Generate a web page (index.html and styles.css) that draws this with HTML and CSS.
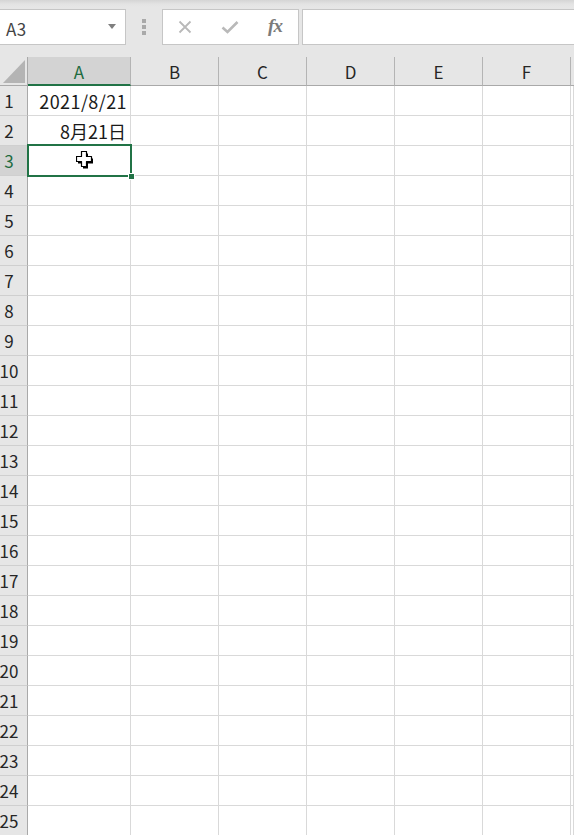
FILE: index.html
```html
<!DOCTYPE html>
<html lang="ja">
<head>
<meta charset="utf-8">
<title>Sheet</title>
<link rel="stylesheet" href="styles.css">
</head>
<body>
<div class="app">
  <div class="toolbar">
    <div class="namebox">
      <span class="nametext">A3</span>
      <svg class="arrow" width="8" height="5" viewBox="0 0 8 5"><polygon points="0,0 8,0 4,5" fill="#7f7f7f"/></svg>
    </div>
    <div class="dots"><span></span><span></span><span></span></div>
    <div class="fbuttons">
      <div class="slot s1"><svg width="14" height="14" viewBox="0 0 14 14"><path d="M1.5 1.5 L12.5 12.5 M12.5 1.5 L1.5 12.5" stroke="#b9b9b9" stroke-width="1.8" fill="none"/></svg></div>
      <div class="slot s2"><svg width="18" height="14" viewBox="0 0 18 14"><path d="M1.5 7.5 L6.5 12 L16.5 2" stroke="#b9b9b9" stroke-width="2.6" fill="none"/></svg></div>
      <div class="slot s3"><span class="fx">fx</span></div>
    </div>
    <div class="formula"></div>
  </div>

  <div class="sheetwrap">
    <div class="sheet">
      <div class="corner"><svg width="28" height="29" viewBox="0 0 28 29"><polygon points="25,3 25,26 3,26" fill="#b4b4b4"/></svg></div>
      <div class="ch sel">A</div><div class="ch">B</div><div class="ch">C</div><div class="ch">D</div><div class="ch">E</div><div class="ch">F</div><div class="ch last"></div>

      <div class="rh">1</div><div class="c ra num">2021/8/21</div><div class="c"></div><div class="c"></div><div class="c"></div><div class="c"></div><div class="c"></div><div class="c"></div>
      <div class="rh">2</div><div class="c ra j">8月21日</div><div class="c"></div><div class="c"></div><div class="c"></div><div class="c"></div><div class="c"></div><div class="c"></div>
      <div class="rh sel">3</div><div class="c"></div><div class="c"></div><div class="c"></div><div class="c"></div><div class="c"></div><div class="c"></div><div class="c"></div>
      <div class="rh">4</div><div class="c"></div><div class="c"></div><div class="c"></div><div class="c"></div><div class="c"></div><div class="c"></div><div class="c"></div>
      <div class="rh">5</div><div class="c"></div><div class="c"></div><div class="c"></div><div class="c"></div><div class="c"></div><div class="c"></div><div class="c"></div>
      <div class="rh">6</div><div class="c"></div><div class="c"></div><div class="c"></div><div class="c"></div><div class="c"></div><div class="c"></div><div class="c"></div>
      <div class="rh">7</div><div class="c"></div><div class="c"></div><div class="c"></div><div class="c"></div><div class="c"></div><div class="c"></div><div class="c"></div>
      <div class="rh">8</div><div class="c"></div><div class="c"></div><div class="c"></div><div class="c"></div><div class="c"></div><div class="c"></div><div class="c"></div>
      <div class="rh">9</div><div class="c"></div><div class="c"></div><div class="c"></div><div class="c"></div><div class="c"></div><div class="c"></div><div class="c"></div>
      <div class="rh">10</div><div class="c"></div><div class="c"></div><div class="c"></div><div class="c"></div><div class="c"></div><div class="c"></div><div class="c"></div>
      <div class="rh">11</div><div class="c"></div><div class="c"></div><div class="c"></div><div class="c"></div><div class="c"></div><div class="c"></div><div class="c"></div>
      <div class="rh">12</div><div class="c"></div><div class="c"></div><div class="c"></div><div class="c"></div><div class="c"></div><div class="c"></div><div class="c"></div>
      <div class="rh">13</div><div class="c"></div><div class="c"></div><div class="c"></div><div class="c"></div><div class="c"></div><div class="c"></div><div class="c"></div>
      <div class="rh">14</div><div class="c"></div><div class="c"></div><div class="c"></div><div class="c"></div><div class="c"></div><div class="c"></div><div class="c"></div>
      <div class="rh">15</div><div class="c"></div><div class="c"></div><div class="c"></div><div class="c"></div><div class="c"></div><div class="c"></div><div class="c"></div>
      <div class="rh">16</div><div class="c"></div><div class="c"></div><div class="c"></div><div class="c"></div><div class="c"></div><div class="c"></div><div class="c"></div>
      <div class="rh">17</div><div class="c"></div><div class="c"></div><div class="c"></div><div class="c"></div><div class="c"></div><div class="c"></div><div class="c"></div>
      <div class="rh">18</div><div class="c"></div><div class="c"></div><div class="c"></div><div class="c"></div><div class="c"></div><div class="c"></div><div class="c"></div>
      <div class="rh">19</div><div class="c"></div><div class="c"></div><div class="c"></div><div class="c"></div><div class="c"></div><div class="c"></div><div class="c"></div>
      <div class="rh">20</div><div class="c"></div><div class="c"></div><div class="c"></div><div class="c"></div><div class="c"></div><div class="c"></div><div class="c"></div>
      <div class="rh">21</div><div class="c"></div><div class="c"></div><div class="c"></div><div class="c"></div><div class="c"></div><div class="c"></div><div class="c"></div>
      <div class="rh">22</div><div class="c"></div><div class="c"></div><div class="c"></div><div class="c"></div><div class="c"></div><div class="c"></div><div class="c"></div>
      <div class="rh">23</div><div class="c"></div><div class="c"></div><div class="c"></div><div class="c"></div><div class="c"></div><div class="c"></div><div class="c"></div>
      <div class="rh">24</div><div class="c"></div><div class="c"></div><div class="c"></div><div class="c"></div><div class="c"></div><div class="c"></div><div class="c"></div>
      <div class="rh">25</div><div class="c"></div><div class="c"></div><div class="c"></div><div class="c"></div><div class="c"></div><div class="c"></div><div class="c"></div>
    </div>
    <div class="selection"><div class="handle"></div></div>
    <svg class="cursor" width="19" height="19" viewBox="0 0 19 19">
      <path d="M7 2.5 H12 V7.5 H17 V12.5 H12 V17.5 H7 V12.5 H2 V7.5 H7 Z" fill="#000"/>
      <path d="M5.5 0.5 H10.5 V5.5 H15.5 V10.5 H10.5 V15.5 H5.5 V10.5 H0.5 V5.5 H5.5 Z" fill="#fff" stroke="#000" stroke-width="1.2" stroke-linejoin="round"/>
    </svg>
  </div>
</div>
</body>
</html>
```
FILE: styles.css
```css
html, body {
  margin: 0;
  padding: 0;
  background: #ffffff;
  overflow: hidden;
}
body {
  font-family: "Noto Sans CJK JP", "Noto Sans", sans-serif;
  color: #222;
}
.app {
  width: 574px;
  height: 835px;
  overflow: hidden;
}
.toolbar {
  height: 57px;
  box-sizing: border-box;
  padding-top: 9px;
  background: linear-gradient(#d5d5d5 0px, #e3e3e3 4px, #e6e6e6 7px);
  display: flex;
  align-items: flex-start;
}
.namebox {
  margin-left: -1px;
  width: 127px;
  height: 36px;
  box-sizing: border-box;
  border: 1px solid #c6c6c6;
  background: #fff;
  display: flex;
  align-items: center;
  justify-content: space-between;
  padding: 0 9px 0 6px;
}
.nametext {
  font-size: 17px;
  color: #444;
  letter-spacing: 0.5px;
  line-height: 1;
  padding-top: 2px;
}
.arrow {
  margin-top: -2px;
}
.dots {
  margin-left: 16px;
  width: 4px;
  height: 36px;
  display: flex;
  flex-direction: column;
  justify-content: center;
  gap: 2px;
}
.dots span {
  display: block;
  width: 4px;
  height: 4px;
  background: #a9a9a9;
}
.fbuttons {
  margin-left: 16px;
  width: 137px;
  height: 36px;
  box-sizing: border-box;
  border: 1px solid #c6c6c6;
  background: #fff;
  display: flex;
  align-items: center;
}
.slot {
  height: 34px;
  display: flex;
  align-items: center;
  justify-content: center;
}
.s1 { width: 43px; }
.s2 { width: 48px; }
.s3 { width: 42px; }
.fx {
  font-family: "Liberation Serif", "DejaVu Serif", serif;
  font-style: italic;
  font-weight: bold;
  font-size: 19px;
  color: #7b7b7b;
  letter-spacing: -1px;
  line-height: 1;
  margin-top: -3px;
}
.formula {
  margin-left: 3px;
  flex: 1;
  height: 36px;
  box-sizing: border-box;
  border: 1px solid #c6c6c6;
  border-right: none;
  background: #fff;
}
.sheetwrap {
  position: relative;
}
.sheet {
  display: grid;
  grid-template-columns: 28px 103px repeat(5, 88px) 1fr;
  grid-template-rows: 29px;
  grid-auto-rows: 30px;
}
.corner {
  background: #e6e6e6;
  border-right: 1px solid #a9a9a9;
  border-bottom: 1px solid #a9a9a9;
  box-sizing: border-box;
  overflow: hidden;
}
.corner svg { display: block; }
.ch {
  background: #e6e6e6;
  border-right: 1px solid #b4b4b4;
  border-bottom: 1px solid #a9a9a9;
  box-sizing: border-box;
  display: flex;
  align-items: center;
  justify-content: center;
  font-size: 17px;
  color: #262626;
  padding-top: 1px;
}
.ch.sel {
  background: #d3d3d3;
  color: #1e6b40;
  border-bottom: 2px solid #217346;
}
.ch.last { border-right: none; }
.rh {
  background: #e6e6e6;
  border-right: 1px solid #a9a9a9;
  border-bottom: 1px solid #cfcfcf;
  box-sizing: border-box;
  display: flex;
  align-items: center;
  justify-content: center;
  padding-right: 9px;
  font-size: 17px;
  color: #262626;
}
.rh.sel {
  background: #d3d3d3;
  color: #1e6b40;
}
.c {
  border-right: 1px solid #d9d9d9;
  border-bottom: 1px solid #d9d9d9;
  box-sizing: border-box;
  font-size: 18px;
  color: #1a1a1a;
  display: flex;
  align-items: center;
  white-space: nowrap;
}
.c.ra {
  justify-content: flex-end;
  padding-right: 3px;
}
.c.num { letter-spacing: 0.4px; padding-right: 3px; }
.c.j { padding-right: 4px; }
.selection {
  position: absolute;
  left: 27px;
  top: 87px;
  width: 105px;
  height: 33px;
  box-sizing: border-box;
  border: 2px solid #217346;
}
.handle {
  position: absolute;
  right: -5px;
  bottom: -5px;
  width: 7px;
  height: 7px;
  box-sizing: border-box;
  background: #217346;
  border: 1px solid #fff;
}
.cursor {
  position: absolute;
  left: 76px;
  top: 94px;
}
```
